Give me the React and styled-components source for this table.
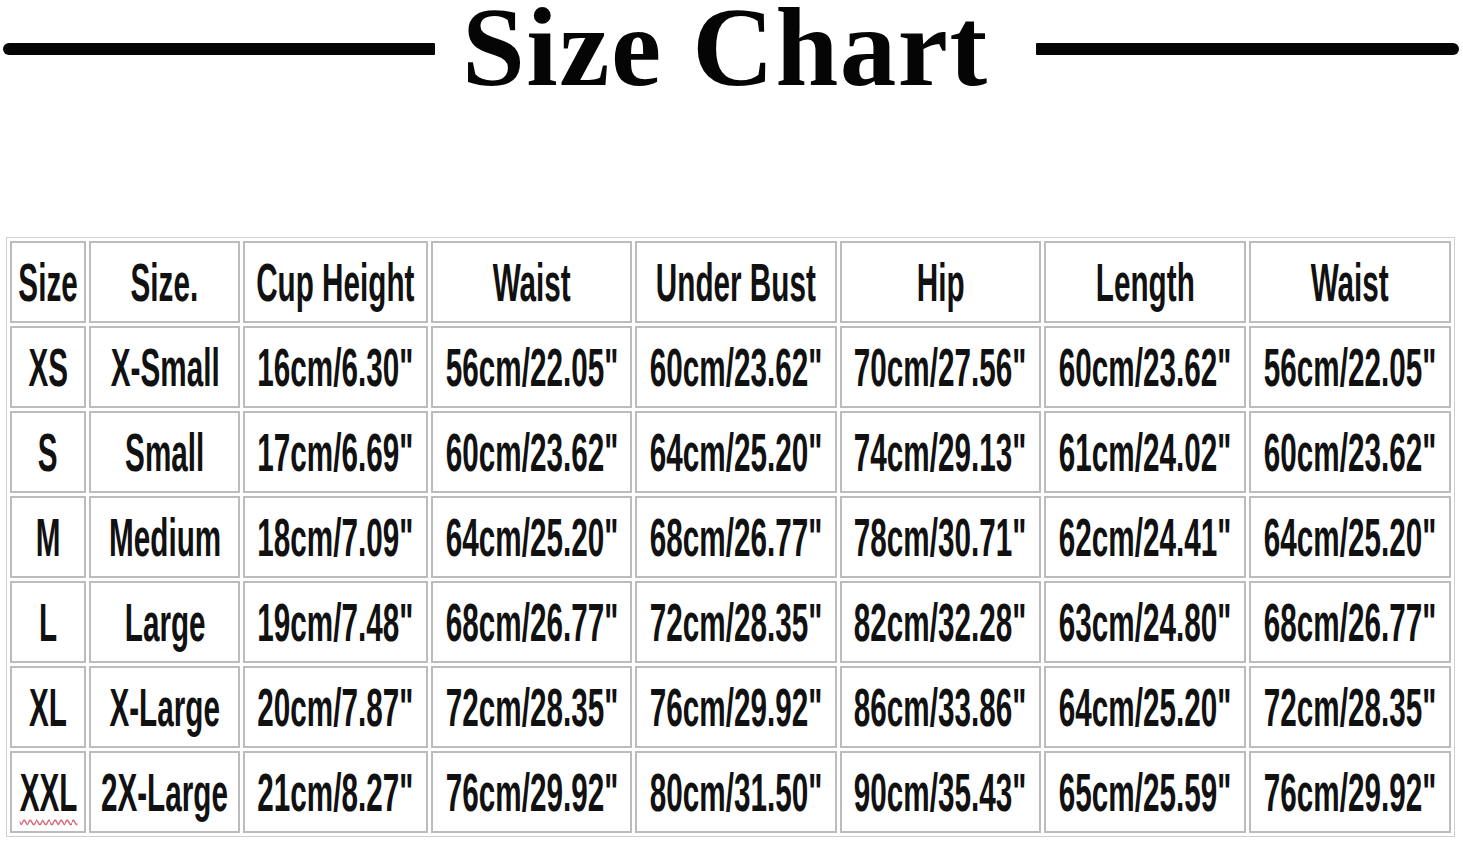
import React from "react";
import styled, { createGlobalStyle } from "styled-components";

const GlobalStyle = createGlobalStyle`
  html, body {
    margin: 0;
    padding: 0;
    background: #ffffff;
  }
  body {
    width: 1463px;
    height: 842px;
    overflow: hidden;
  }
`;

const Page = styled.div`
  width: 1463px;
  height: 842px;
  display: flex;
  flex-direction: column;
  background: #fff;
`;

const Header = styled.header`
  display: flex;
  align-items: flex-start;
  height: 100px;
  padding-left: 3px;
`;

const Rule = styled.div`
  width: ${(p) => p.$width}px;
  height: 12px;
  margin-top: 43px;
  background: #050505;
  border-radius: ${(p) => (p.$round === "left" ? "6px 1px 1px 6px" : "1px 6px 6px 1px")};
`;

const Title = styled.h1`
  margin: 0 ${(p) => p.$gapRight}px 0 ${(p) => p.$gapLeft}px;
  font-family: "Liberation Serif", "Times New Roman", serif;
  font-weight: 700;
  font-size: 113px;
  line-height: 94px;
  letter-spacing: 1.5px;
  color: #050505;
  white-space: nowrap;
`;

const Table = styled.table`
  margin: 137px 0 0 6px;
  border-collapse: separate;
  border-spacing: 3px;
  border: 1px solid #cfcfcf;
  table-layout: fixed;
  width: 1449px;
`;

const Cell = styled.td`
  box-sizing: border-box;
  width: ${(p) => (p.$width ? `${p.$width}px` : "auto")};
  height: 82px;
  padding: 0;
  border: 2px solid #bcbcbc;
  background: #fff;
  vertical-align: middle;
  overflow: visible;
`;

const CellInner = styled.div`
  display: flex;
  justify-content: center;
  align-items: center;
`;

const Squeeze = styled.span`
  display: inline-block;
  font-family: "Liberation Sans", Arial, sans-serif;
  font-weight: 700;
  font-size: 53px;
  line-height: 1;
  color: #111;
  white-space: nowrap;
  transform: scaleX(0.56);
  transform-origin: center;
  text-decoration: ${(p) => (p.$flagged ? "underline wavy #d46a78" : "none")};
  text-decoration-thickness: 2px;
  text-underline-offset: 8px;
`;

const widths = [76, 151, 184, 201, 201, 201, 201, 202];

const head = ["Size", "Size.", "Cup Height", "Waist", "Under Bust", "Hip", "Length", "Waist"];

const rows = [
  ["XS", "X-Small", '16cm/6.30"', '56cm/22.05"', '60cm/23.62"', '70cm/27.56"', '60cm/23.62"', '56cm/22.05"'],
  ["S", "Small", '17cm/6.69"', '60cm/23.62"', '64cm/25.20"', '74cm/29.13"', '61cm/24.02"', '60cm/23.62"'],
  ["M", "Medium", '18cm/7.09"', '64cm/25.20"', '68cm/26.77"', '78cm/30.71"', '62cm/24.41"', '64cm/25.20"'],
  ["L", "Large", '19cm/7.48"', '68cm/26.77"', '72cm/28.35"', '82cm/32.28"', '63cm/24.80"', '68cm/26.77"'],
  ["XL", "X-Large", '20cm/7.87"', '72cm/28.35"', '76cm/29.92"', '86cm/33.86"', '64cm/25.20"', '72cm/28.35"'],
  ["XXL", "2X-Large", '21cm/8.27"', '76cm/29.92"', '80cm/31.50"', '90cm/35.43"', '65cm/25.59"', '76cm/29.92"'],
];

function App() {
  return (
    <Page>
      <GlobalStyle />
      <Header>
        <Rule $width={432} $round="left" />
        <Title $gapLeft={27} $gapRight={47}>Size Chart</Title>
        <Rule $width={423} $round="right" />
      </Header>
      <Table>
        <tbody>
          <tr>
            {head.map((h, i) => (
              <Cell key={i} $width={widths[i]}>
                <CellInner>
                  <Squeeze>{h}</Squeeze>
                </CellInner>
              </Cell>
            ))}
          </tr>
          {rows.map((row, r) => (
            <tr key={r}>
              {row.map((v, i) => (
                <Cell key={i}>
                  <CellInner>
                    <Squeeze $flagged={v === "XXL"}>{v}</Squeeze>
                  </CellInner>
                </Cell>
              ))}
            </tr>
          ))}
        </tbody>
      </Table>
    </Page>
  );
}

export default App;
